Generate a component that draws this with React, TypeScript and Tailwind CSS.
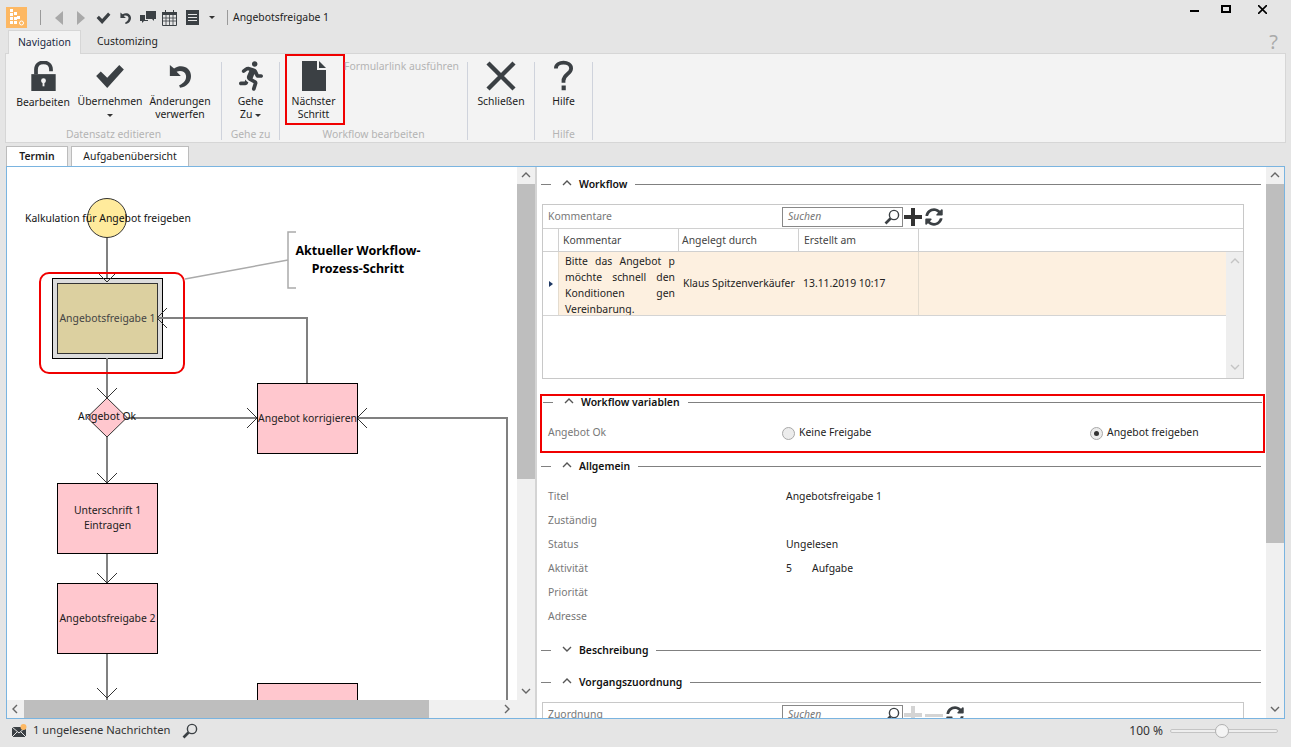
import { ReactNode } from "react";
import { FaRunning, FaSyncAlt } from "react-icons/fa";

const dark = "#3b4044";

function Check({ className }: { className?: string }) {
  return (
    <svg viewBox="0 0 32 26" className={className} fill={dark}>
      <path d="M1 13l5-5 7 7L26 1l5 5-18 20z" />
    </svg>
  );
}

function Undo({ className }: { className?: string }) {
  return (
    <svg viewBox="0 0 26 30" className={className} fill={dark}>
      <path d="M1 2v13h13l-5-5c5-2 10 0 11 4 1 5-2 9-8 12l1 3c8-1 13-7 13-14C26 6 16 0 6 6z" />
    </svg>
  );
}

function Lens({ className }: { className?: string }) {
  return (
    <svg viewBox="0 0 16 16" className={className} fill="none" stroke={dark}>
      <circle cx="10" cy="6" r="4.6" strokeWidth="1.4" />
      <path d="M6.5 9.5L1.5 14.5" strokeWidth="2.6" />
    </svg>
  );
}

function Caret() {
  return <span className="inline-block h-0 w-0 border-x-[3px] border-t-[3px] border-x-transparent border-t-[#333] align-middle" />;
}

function Plus({ color }: { color: string }) {
  return (
    <svg viewBox="0 0 18 18" className="h-[18px] w-[18px]" fill={color}>
      <path d="M7 0h4v7h7v4h-7v7H7v-7H0V7h7z" />
    </svg>
  );
}

function RibbonButton({ width, icon, children, boxed }: { width: string; icon: ReactNode; children: ReactNode; boxed?: boolean }) {
  return (
    <div className={`flex h-[71px] flex-col items-center text-center leading-[13px] ${width} ${boxed ? "border-2 border-[#f00000] pr-[3px]" : ""}`}>
      <div className={`flex items-center justify-center ${boxed ? "h-[39px]" : "mt-[3px] h-[38px]"}`}>{icon}</div>
      <div>{children}</div>
    </div>
  );
}

function RibbonGroup({ width, label, children }: { width: string; label: string; children: ReactNode }) {
  return (
    <div className={`relative flex h-[78px] flex-col border-r border-[#cfd3dc] ${width}`}>
      <div className="flex h-[63px] flex-1 items-start">{children}</div>
      <div className="h-[12px] text-center leading-[13px] text-[#b4b4b4]">{label}</div>
    </div>
  );
}

function Ribbon() {
  return (
    <div className="mx-[5px] flex h-[90px] border border-[#d6d6d6] bg-[#f3f3f3] pt-[8px]">
      <RibbonGroup width="w-[216px]" label="Datensatz editieren">
        <div className="-mt-[8px] flex pl-[5px]">
          <RibbonButton
            width="w-[64px]"
            icon={
              <svg viewBox="0 0 26 32" className="h-[30px] w-[25px]" fill={dark}>
                <path d="M0 14h26v18H0z" />
                <path d="M5 14V9c0-10 16-10 16 0v2" fill="none" stroke={dark} strokeWidth="4" />
                <circle cx="13" cy="21" r="2.6" fill="#f3f3f3" />
                <path d="M12 22h2v5h-2z" fill="#f3f3f3" />
              </svg>
            }
          >
            <div className="mt-[1px]">Bearbeiten</div>
          </RibbonButton>
          <RibbonButton width="w-[70px]" icon={<Check className="h-[24px] w-[30px]" />}>
            <div>Übernehmen</div>
            <div><Caret /></div>
          </RibbonButton>
          <RibbonButton width="w-[70px]" icon={<Undo className="h-[28px] w-[22px]" />}>
            <div>Änderungen</div>
            <div>verwerfen</div>
          </RibbonButton>
        </div>
      </RibbonGroup>
      <RibbonGroup width="w-[58px]" label="Gehe zu">
        <div className="-mt-[8px] w-full">
          <RibbonButton width="w-full" icon={<FaRunning className="h-[32px] w-[24px] text-[#3b4044]" />}>
            <div>Gehe</div>
            <div>Zu <Caret /></div>
          </RibbonButton>
        </div>
      </RibbonGroup>
      <RibbonGroup width="w-[188px]" label="Workflow bearbeiten">
        <div className="-mt-[8px] flex pl-[5px]">
          <RibbonButton
            boxed
            width="w-[60px]"
            icon={
              <svg viewBox="0 0 24 30" className="h-[30px] w-[24px]" fill={dark}>
                <path d="M0 0h15v9h9v21H0z" />
                <path d="M17 0l7 7h-7z" />
              </svg>
            }
          >
            <div>Nächster</div>
            <div>Schritt</div>
          </RibbonButton>
          <div className="-ml-px whitespace-nowrap pt-[5px] text-[#b4b4b4]">Formularlink ausführen</div>
        </div>
      </RibbonGroup>
      <RibbonGroup width="w-[67px]" label="">
        <div className="-mt-[8px] w-full">
          <RibbonButton
            width="w-full"
            icon={
              <svg viewBox="0 0 30 30" className="h-[30px] w-[30px]" fill="none" stroke={dark} strokeWidth="4.4">
                <path d="M2 2l26 26M28 2L2 28" />
              </svg>
            }
          >
            Schließen
          </RibbonButton>
        </div>
      </RibbonGroup>
      <RibbonGroup width="w-[58px]" label="Hilfe">
        <div className="-mt-[8px] w-full">
          <RibbonButton
            width="w-full"
            icon={
              <svg viewBox="0 0 20 32" className="h-[32px] w-[19px]" fill="none" stroke={dark} strokeWidth="4">
                <path d="M2 8c0-8 16-8 16 0 0 6-8 6-8 13v2" />
                <path d="M8 26h4.400v5H8z" fill={dark} stroke="none" />
              </svg>
            }
          >
            Hilfe
          </RibbonButton>
        </div>
      </RibbonGroup>
    </div>
  );
}

function TitleBar() {
  return (
    <div className="flex h-[30px] items-center pl-[6px] pt-[5px]">
      <svg viewBox="0 0 21 21" className="h-[21px] w-[21px]">
        <path d="M0 0h21v21H0z" fill="#fdb863" />
        <path d="M4 2h3v3H4zM8 5h3v3H8zM4 6h3v3H4zM11 9h3v3h-3zM8 10h3v3H8zM4 10h3v3H4zM4 14h3v3H4zM8 14h3v3H8z" fill="#fff" />
        <circle cx="15.5" cy="16" r="2" fill="none" stroke="#fff" />
      </svg>
      <div className="ml-[13px] h-[15px] w-px bg-[#9a9a9a]" />
      <div className="ml-[14px] h-0 w-0 border-y-[7px] border-r-[8px] border-y-transparent border-r-[#a9a9a9]" />
      <div className="ml-[14px] h-0 w-0 border-y-[7px] border-l-[8px] border-y-transparent border-l-[#a9a9a9]" />
      <Check className="ml-[11px] h-[12px] w-[15px]" />
      <Undo className="ml-[9px] h-[14px] w-[11px]" />
      <svg viewBox="0 0 16 13" className="ml-[9px] h-[13px] w-[16px]" fill={dark}>
        <path d="M6 0h10v8h-2v2l-2-2H6z" />
        <path d="M0 4h5v5h3v1H4l-2 2v-2H0z" />
      </svg>
      <svg viewBox="0 0 15 16" className="ml-[6px] h-[16px] w-[15px]" fill="none" stroke={dark}>
        <path d="M.5 2.500h14v13H.5z" />
        <path d="M0 2h15v3H0z" fill={dark} stroke="none" />
        <path d="M3 0h1v3H3zM11 0h1v3h-1z" fill={dark} stroke="none" />
        <path d="M.5 8h14M.5 11h14M4 5v10M7.5 5v10M11 5v10" strokeWidth=".8" />
      </svg>
      <svg viewBox="0 0 13 15" className="ml-[9px] h-[15px] w-[13px]" fill={dark}>
        <path d="M0 0h13v15H0z" />
        <path d="M2 4h9v1H2zM2 7h9v1H2zM2 10h9v1H2z" fill="#e5e5e5" />
      </svg>
      <div className="ml-[10px] flex"><Caret /></div>
      <div className="ml-[12px] h-[15px] w-px bg-[#9a9a9a]" />
      <div className="ml-[5px] text-[#222]">Angebotsfreigabe 1</div>
      <div className="ml-auto flex items-start self-start pr-[24px]">
        <div className="mt-[5px] h-[2px] w-[9px] bg-black" />
        <div className="ml-[22px] h-[8px] w-[10px] border-2 border-black" />
        <svg viewBox="0 0 9 9" className="ml-[27px] h-[9px] w-[9px]" stroke="#000" strokeWidth="1.6">
          <path d="M0 0l9 9M9 0L0 9" />
        </svg>
      </div>
    </div>
  );
}

function Node({ pos, fill = "bg-[#ffc7ce]", children }: { pos: string; fill?: string; children: ReactNode }) {
  return (
    <div className={`absolute flex h-[71px] w-[101px] items-center justify-center whitespace-nowrap border border-black text-center leading-[15px] ${fill} ${pos}`}>
      {children}
    </div>
  );
}

function Diagram() {
  const arrows: [number, number, "down" | "left" | "right"][] = [
    [107, 282, "down"], [107, 398, "down"], [107, 483, "down"], [107, 583, "down"], [107, 698, "down"],
    [157, 318, "left"], [357, 418, "left"], [257, 418, "right"],
  ];
  return (
    <div className="relative flex-1 overflow-hidden bg-white">
      <div className="absolute left-[45px] top-[111px] h-[81px] w-[111px] border border-black bg-[#dcdcdc]" />
      <svg viewBox="7 167 510 533" className="absolute inset-0 h-[533px] w-[510px]" fill="none">
        <g stroke="#808080" strokeWidth="2">
          <path d="M107 237v41M107 358v40M107 437v46M107 553v30M107 653v47" />
          <path d="M127 418h130M307 383v-65H157M357 418h150v282" />
        </g>
        <circle cx="107" cy="218" r="19.5" fill="#ffeb9c" stroke="#333" />
        <path d="M107 398l20 19.500-20 19.500-20-19.500z" fill="#ffc7ce" stroke="#333" />
        <g stroke="#333">
          {arrows.map(([x, y, dir]) => {
            if (dir === "down") return <path key={`${x}-${y}`} d={`M${x - 10} ${y - 10}L${x} ${y}L${x + 10} ${y - 10}`} />;
            if (dir === "left") return <path key={`${x}-${y}`} d={`M${x + 10} ${y - 10}L${x} ${y}L${x + 10} ${y + 10}`} />;
            return <path key={`${x}-${y}`} d={`M${x - 10} ${y - 10}L${x} ${y}L${x - 10} ${y + 10}`} />;
          })}
        </g>
        <path d="M185 279l103-19" stroke="#aaa" strokeWidth="1.5" />
        <path d="M296 232h-8v56h8" stroke="#aaa" strokeWidth="1.5" />
      </svg>
      <div className="absolute left-[18px] top-[44px] whitespace-nowrap leading-[15px] text-[#111]">Kalkulation für Angebot freigeben</div>
      <div className="absolute left-[32px] top-[105px] h-[102px] w-[146px] rounded-[10px] border-2 border-[#f00000]" />
      <div className="absolute left-[50px] top-[116px] flex h-[71px] w-[101px] items-center justify-center whitespace-nowrap border border-[#333] bg-[#dcd0a0] text-[#444]">Angebotsfreigabe 1</div>
      <div className="absolute left-[71px] top-[242px] whitespace-nowrap leading-[15px] text-[#111]">Angebot Ok</div>
      <Node pos="left-[250px] top-[216px]">Angebot korrigieren</Node>
      <Node pos="left-[50px] top-[316px]"><div className="-mt-[2px]">Unterschrift 1<br />Eintragen</div></Node>
      <Node pos="left-[50px] top-[416px]">Angebotsfreigabe 2</Node>
      <Node pos="left-[250px] top-[516px]"> </Node>
      <div className="absolute left-[288px] top-[75px] w-[126px] whitespace-nowrap text-center text-[12.5px] font-bold leading-[18px] text-black">
        Aktueller Workflow-
        <br />
        Prozess-Schritt
      </div>
    </div>
  );
}

function Chevron({ dir, className }: { dir: "up" | "down" | "left" | "right"; className?: string }) {
  const d = { up: "M1 6l4-4 4 4", down: "M1 2l4 4 4-4", left: "M6 1L2 5l4 4", right: "M2 1l4 4-4 4" }[dir];
  return (
    <svg viewBox="0 0 10 10" className={`h-[10px] w-[10px] ${className ?? ""}`} fill="none" stroke="currentColor" strokeWidth="1.4">
      <path d={d} />
    </svg>
  );
}

function LeftPane() {
  return (
    <div className="flex w-[528px] flex-col">
      <div className="flex h-[533px]">
        <Diagram />
        <div className="flex w-[18px] flex-col bg-[#f0f0f0]">
          <div className="flex h-[17px] items-center justify-center text-[#666]"><Chevron dir="up" /></div>
          <div className="h-[295px] bg-[#bebebe]" />
          <div className="flex-1" />
          <div className="flex h-[17px] items-center justify-center text-[#666]"><Chevron dir="down" /></div>
        </div>
      </div>
      <div className="flex h-[18px] bg-[#f0f0f0]">
        <div className="flex w-[17px] items-center justify-center text-[#666]"><Chevron dir="left" /></div>
        <div className="w-[405px] bg-[#bebebe]" />
        <div className="flex flex-1 items-center justify-end pr-[22px] text-[#666]"><Chevron dir="right" /></div>
      </div>
    </div>
  );
}

function SectionHead({ title, open = true, className = "" }: { title: string; open?: boolean; className?: string }) {
  return (
    <div className={`flex h-[16px] shrink-0 items-center ${className}`}>
      <div className="h-px w-[10px] bg-[#808080]" />
      <Chevron dir={open ? "up" : "down"} className="ml-[11px] text-[#555]" />
      <div className="ml-[7px] font-semibold leading-[16px] text-[#111]">{title}</div>
      <div className="ml-[8px] h-px flex-1 bg-[#808080]" />
    </div>
  );
}

function SearchBox() {
  return (
    <div className="flex h-[20px] w-[121px] shrink-0 items-center border border-[#888] bg-white pl-[5px] pr-[2px] text-[#777]">
      <span className="italic">Suchen</span>
      <Lens className="ml-auto h-[16px] w-[16px]" />
    </div>
  );
}

function Field({ label, children }: { label: string; children?: ReactNode }) {
  return (
    <div className="flex h-[24px] items-center">
      <div className="w-[238px] text-[#777]">{label}</div>
      {children}
    </div>
  );
}

function Radio({ on }: { on?: boolean }) {
  return (
    <div className="flex h-[13px] w-[13px] items-center justify-center rounded-full border border-[#a8a8a8] bg-[#ececec]">
      {on && <div className="h-[5px] w-[5px] rounded-full bg-[#333]" />}
    </div>
  );
}

function RightPane() {
  return (
    <div className="flex flex-1 border-l-2 border-[#d4d4d4]">
      <div className="flex h-[551px] flex-1 flex-col overflow-hidden bg-white pl-[4px]">
        <SectionHead title="Workflow" className="mt-[9px] pr-[5px]" />
        <div className="ml-[1px] mt-[12px] h-[175px] w-[702px] shrink-0 border border-[#c8c8c8]">
          <div className="flex h-[24px] items-center border-b border-[#d0d0d0] pl-[5px] text-[#777]">
            <span>Kommentare</span>
            <div className="flex-1" />
            <SearchBox />
            <div className="ml-px"><Plus color="#333" /></div>
            <FaSyncAlt className="ml-[3px] h-[18px] w-[18px] shrink-0 text-[#3b4044]" />
            <div className="w-[300px] shrink-0" />
          </div>
          <div className="flex h-[23px] items-center border-b border-[#d0d0d0] text-[#444]">
            <div className="h-full w-[16px] border-r border-[#d0d0d0]" />
            <div className="flex h-full w-[120px] items-center border-r border-[#d0d0d0] pl-[4px] pt-[2px]">Kommentar</div>
            <div className="flex h-full w-[120px] items-center border-r border-[#d0d0d0] pl-[3px] pt-[2px]">Angelegt durch</div>
            <div className="flex h-full w-[120px] items-center border-r border-[#d0d0d0] pl-[5px] pt-[2px]">Erstellt am</div>
          </div>
          <div className="flex h-[126px]">
            <div className="flex-1">
              <div className="flex h-[64px] items-center border-b border-[#d4d4d4] bg-[#fdf0e0]">
                <div className="flex h-full w-[16px] items-center justify-center border-r border-[#e4dccf] bg-white">
                  <div className="h-0 w-0 border-y-[3.500px] border-l-[4px] border-y-transparent border-l-[#1f3864]" />
                </div>
                <div className="h-full w-[120px] overflow-hidden pl-[6px] pr-[4px] pt-px leading-[16px] text-[#222]">
                  <div className="flex justify-between"><span>Bitte</span><span>das</span><span>Angebot</span><span>p</span></div>
                  <div className="flex justify-between"><span>möchte</span><span>schnell</span><span>den</span></div>
                  <div className="flex justify-between"><span>Konditionen</span><span>gen</span></div>
                  <div>Vereinbarung.</div>
                </div>
                <div className="w-[120px] whitespace-nowrap pl-[4px] pt-px text-[#222]">Klaus Spitzenverkäufer</div>
                <div className="flex h-full w-[120px] items-center whitespace-nowrap border-r border-[#e4dccf] pl-[4px] pt-px text-[#222]">13.11.2019 10:17</div>
              </div>
            </div>
            <div className="flex w-[17px] flex-col items-center justify-between bg-[#eeeeee] py-[5px] text-[#c4c4c4]">
              <Chevron dir="up" />
              <Chevron dir="down" />
            </div>
          </div>
        </div>
        <div className="-ml-[1px] mr-[1px] mt-[15px] h-[59px] shrink-0 border-2 border-[#f00000] px-[1px]">
          <SectionHead title="Workflow variablen" className="-mt-[2px]" />
          <div className="mt-[15px] flex h-[16px] items-center pl-[5px]">
            <div className="w-[234px] text-[#777]">Angebot Ok</div>
            <Radio />
            <span className="ml-[4px] w-[291px] text-[#222]">Keine Freigabe</span>
            <Radio on />
            <span className="ml-[4px] text-[#222]">Angebot freigeben</span>
          </div>
        </div>
        <SectionHead title="Allgemein" className="mt-[5px] pr-[5px]" />
        <div className="mt-[11px] shrink-0 pl-[7px]">
          <Field label="Titel"><span className="text-[#222]">Angebotsfreigabe 1</span></Field>
          <Field label="Zuständig" />
          <Field label="Status"><span className="text-[#222]">Ungelesen</span></Field>
          <Field label="Aktivität">
            <span className="w-[26px] text-[#222]">5</span>
            <span className="text-[#222]">Aufgabe</span>
          </Field>
          <Field label="Priorität" />
          <Field label="Adresse" />
        </div>
        <SectionHead title="Beschreibung" open={false} className="mt-[13px] pr-[5px]" />
        <SectionHead title="Vorgangszuordnung" className="mt-[16px] pr-[5px]" />
        <div className="ml-[1px] mt-[12px] w-[702px] shrink-0 border border-[#c8c8c8]">
          <div className="flex h-[24px] items-center pl-[5px] text-[#777]">
            <span>Zuordnung</span>
            <div className="flex-1" />
            <SearchBox />
            <div className="ml-px"><Plus color="#d4d4d4" /></div>
            <div className="ml-[3px] h-[3px] w-[18px] shrink-0 bg-[#d4d4d4]" />
            <FaSyncAlt className="ml-[3px] h-[18px] w-[18px] shrink-0 text-[#3b4044]" />
            <div className="w-[279px] shrink-0" />
          </div>
        </div>
      </div>
      <div className="flex h-[551px] w-[18px] flex-col bg-[#f0f0f0]">
        <div className="flex h-[17px] items-center justify-center text-[#666]"><Chevron dir="up" /></div>
        <div className="h-[359px] bg-[#bebebe]" />
        <div className="flex-1" />
        <div className="flex h-[17px] items-center justify-center text-[#666]"><Chevron dir="down" /></div>
      </div>
    </div>
  );
}

export default function App() {
  return (
    <div className="flex h-[747px] w-[1291px] flex-col overflow-hidden bg-[#e5e5e5] font-['Noto_Sans',sans-serif] text-[10.4px] text-[#1c1c1c]">
      <TitleBar />
      <div className="relative flex h-[23px] items-end pl-[8px]">
        <div className="relative z-10 -mb-px flex h-[24px] w-[73px] items-center justify-center border border-b-0 border-[#d6d6d6] bg-[#f3f3f3] text-[#1c2a44]">Navigation</div>
        <div className="ml-[16px] flex h-[23px] items-center">Customizing</div>
        <div className="ml-auto mr-[13px] self-center text-[20px] leading-[20px] text-[#aaa]">?</div>
      </div>
      <Ribbon />
      <div className="flex h-[23px] items-end pl-[6px] pt-[3px]">
        <div className="flex h-[20px] w-[62px] items-center justify-center border border-b-0 border-[#bcbcbc] bg-white font-semibold">Termin</div>
        <div className="ml-[3px] flex h-[20px] w-[118px] items-center justify-center border border-b-0 border-[#bcbcbc] bg-white">Aufgabenübersicht</div>
      </div>
      <div className="mx-[6px] flex h-[553px] shrink-0 border border-[#7ab4e0] bg-white">
        <LeftPane />
        <RightPane />
      </div>
      <div className="flex flex-1 items-center pb-[5px] pl-[12px] pr-[13px] text-[#333]">
        <svg viewBox="0 0 15 14" className="h-[14px] w-[15px]">
          <path d="M0 3h14v10H0z" fill="#3b4044" />
          <path d="M0 3l7 6 7-6M0 13l5-5M14 13l-5-5" stroke="#e5e5e5" fill="none" />
          <circle cx="11.500" cy="3" r="3" fill="#fdb863" />
        </svg>
        <span className="ml-[6px] text-[11.2px]">1 ungelesene Nachrichten</span>
        <Lens className="ml-[12px] h-[16px] w-[16px]" />
        <span className="ml-auto text-[12px]">100 %</span>
        <div className="relative ml-[7px] h-[4px] w-[108px] rounded-full border border-[#c4c4c4] bg-[#eee]">
          <div className="absolute left-[44px] top-[-6px] h-[14px] w-[14px] rounded-full border border-[#b0b0b0] bg-[#f4f4f4]" />
        </div>
      </div>
    </div>
  );
}
